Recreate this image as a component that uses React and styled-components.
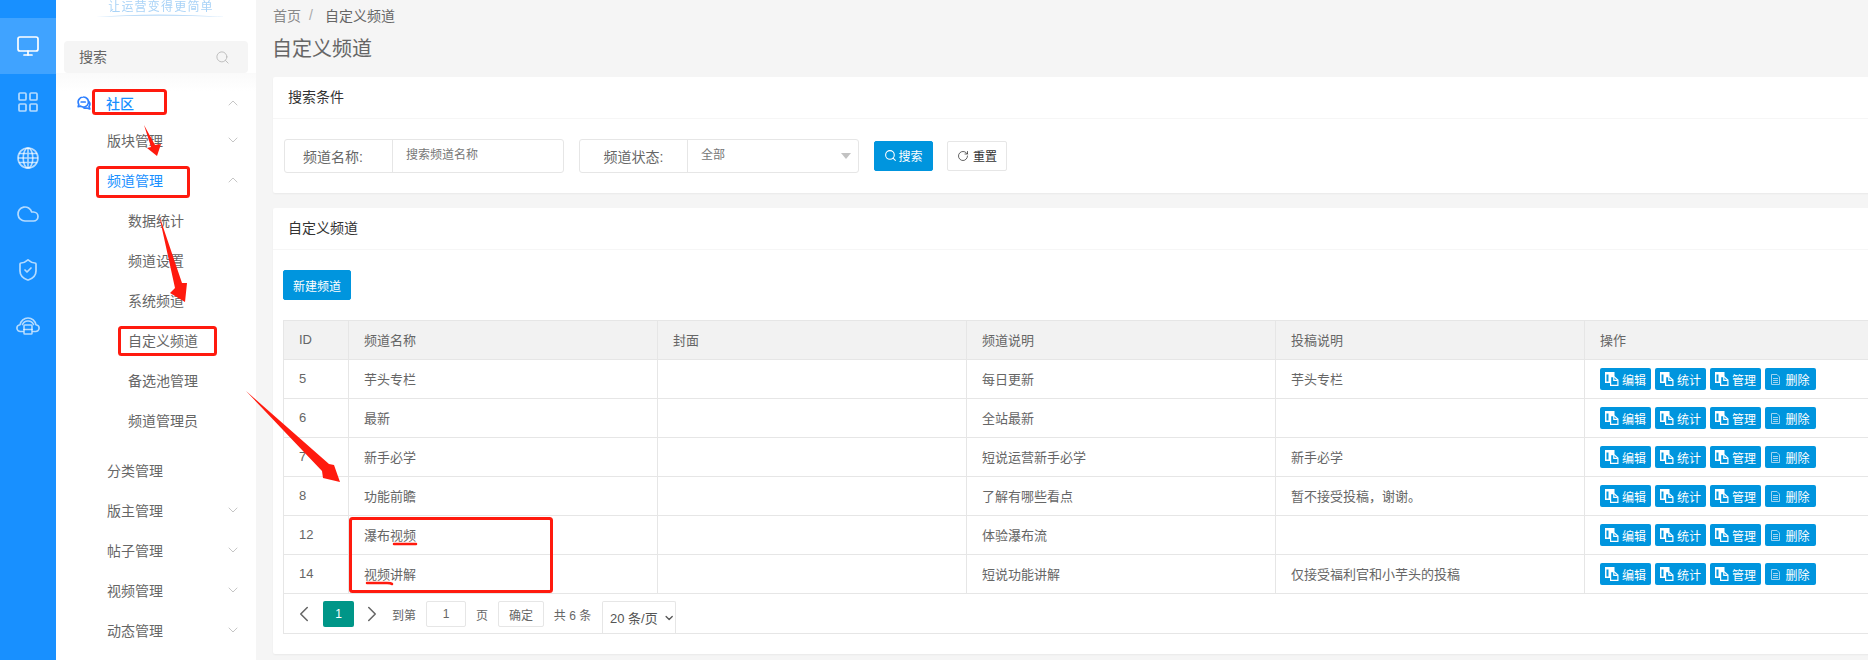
import React from 'react'
import styled, { createGlobalStyle } from 'styled-components'
import { Monitor, LayoutGrid, Cloud, ShieldCheck, Search, ChevronUp, ChevronDown, ChevronLeft, ChevronRight, RotateCw } from 'lucide-react'

const GlobalStyle = createGlobalStyle`
  html, body {
    margin: 0;
    padding: 0;
    background: #f5f5f5;
    overflow: hidden;
  }
  * { box-sizing: border-box; }
  body {
    font-family: "Liberation Sans", "Noto Sans CJK SC", sans-serif;
    font-size: 14px;
    color: #666;
  }
`

const Page = styled.div`
  position: relative;
  display: flex;
  width: 1868px;
  height: 660px;
  overflow: hidden;
`

// left icon rail
const Rail = styled.nav`
  flex: 0 0 56px;
  padding-top: 18px;
  background: #1890ff;
`
const RailItem = styled.div`
  display: flex;
  align-items: center;
  justify-content: center;
  height: 56px;
  color: ${p => (p.$active ? '#fff' : 'rgba(255,255,255,.68)')};
  background: ${p => (p.$active ? '#40a3ff' : 'transparent')};
`

// second column
const Side = styled.aside`
  flex: 0 0 200px;
  background: #fff;
  overflow: hidden;
`
const Logo = styled.div`
  display: flex;
  flex-direction: column;
  align-items: center;
  height: 41px;
  padding-top: 1px;
  padding-left: 10px;
  color: #a9d3f7;
  font-size: 12px;
  line-height: 13px;
  letter-spacing: 1.2px;
  white-space: nowrap;
  filter: blur(.4px);
  svg { display: block; margin-top: -1px; }
`
const SearchBox = styled.div`
  display: flex;
  align-items: center;
  justify-content: space-between;
  height: 32px;
  margin: 0 8px;
  padding: 0 18px 0 15px;
  background: #f5f5f5;
  border-radius: 4px;
  color: #bbb;
  span { color: #666; padding-bottom: 2px; }
`
const Menu = styled.div`
  padding-top: 13px;
  padding-bottom: 20px;
  background: linear-gradient(#fafafa, #fff 18px);
`
const MenuRow = styled.div`
  display: flex;
  align-items: center;
  justify-content: space-between;
  height: ${p => (p.$top ? 34 : 40)}px;
  margin-top: ${p => (p.$gap ? 10 : 0)}px;
  padding: 0 15px 0 ${p => (p.$top ? 21 : p.$sub ? 72 : 51)}px;
  color: ${p => (p.$on ? '#1890ff' : '#666')};
  font-weight: ${p => (p.$top ? 500 : 400)};
  svg.chev { color: #c6c6c6; }
`
const MenuLabel = styled.span`
  display: flex;
  align-items: center;
  gap: 15px;
`

// main column
const Main = styled.main`
  flex: 1;
  min-width: 0;
  padding-left: 17px;
  overflow: hidden;
`
const Crumbs = styled.div`
  display: flex;
  align-items: center;
  height: 30px;
  color: #666;
  i { font-style: normal; color: #aaa; margin: 0 12px 0 8px; }
  span:first-child { color: #888; }
`
const Title = styled.h1`
  margin: 0 0 11px -1px;
  height: 36px;
  font-size: 20px;
  font-weight: 400;
  line-height: 38px;
  color: #666;
`
const Card = styled.section`
  width: 1640px;
  margin-bottom: 15px;
  background: #fff;
  border-radius: 2px;
  box-shadow: 0 1px 2px rgba(0,0,0,.05);
`
const CardHead = styled.div`
  height: 42px;
  padding-left: 15px;
  line-height: 41px;
  color: #333;
  border-bottom: 1px solid #f6f6f6;
`
const FilterBody = styled.div`
  display: flex;
  align-items: center;
  height: 74px;
  padding: 0 0 1px 11px;
`
const Field = styled.div`
  display: flex;
  width: 280px;
  height: 34px;
  margin-right: 15px;
  border: 1px solid #e6e6e6;
  border-radius: 3px;
`
const FieldLabel = styled.label`
  flex: 0 0 108px;
  padding-right: ${p => p.$pr || 0}px;
  text-align: center;
  line-height: 34px;
  border-right: 1px solid #e6e6e6;
`
const FieldValue = styled.div`
  position: relative;
  flex: 1;
  padding-left: 13px;
  font-size: 12px;
  line-height: 30px;
  color: #777;
`
const Caret = styled.b`
  position: absolute;
  right: 7px;
  top: 13px;
  border-top: 6px solid #c2c2c2;
  border-left: 5.5px solid transparent;
  border-right: 5.5px solid transparent;
`
const Btn = styled.button`
  display: inline-flex;
  align-items: center;
  justify-content: center;
  gap: ${p => (p.$ghost ? 4 : 1)}px;
  width: ${p => p.$w}px;
  height: 30px;
  margin-right: ${p => p.$mr || 0}px;
  padding: 0;
  font: inherit;
  font-size: 12px;
  color: ${p => (p.$ghost ? '#333' : '#fff')};
  background: ${p => (p.$ghost ? '#fff' : '#0095de')};
  border: 1px solid ${p => (p.$ghost ? '#e6e6e6' : '#0095de')};
  border-radius: 2px;
`
const ListBody = styled.div`
  padding: 20px 0 20px 10px;
`
const Table = styled.table`
  width: 1606px;
  margin-top: 20px;
  table-layout: fixed;
  border-collapse: collapse;
  font-size: 13px;
  th, td {
    height: 39px;
    padding: 0 15px 2px;
    font-weight: 400;
    text-align: left;
    color: #666;
    border: 1px solid #e6e6e6;
  }
  th { background: #f2f2f2; }
`
const Ops = styled.div`
  display: flex;
  gap: 4px;
  margin-top: 2px;
`
const OpBtn = styled.span`
  display: flex;
  align-items: center;
  justify-content: center;
  gap: ${p => (p.$del ? 5 : 3)}px;
  width: 51px;
  height: 22px;
  font-size: 12px;
  color: #fff;
  background: #0095de;
  border-radius: 2px;
`
const Pager = styled.div`
  display: flex;
  align-items: flex-end;
  width: 1606px;
  height: 40px;
  font-size: 12px;
  white-space: nowrap;
  color: #666;
  border: 1px solid #e6e6e6;
  border-top: 0;
`
const PagerCell = styled.span`
  display: flex;
  align-items: center;
  justify-content: center;
  flex: none;
  width: ${p => p.$w}px;
  height: 26px;
  margin: 0 ${p => p.$mr || 0}px 6px ${p => p.$ml || 0}px;
  color: ${p => (p.$on ? '#fff' : '#666')};
  background: ${p => (p.$on ? '#009688' : 'transparent')};
  border: ${p => (p.$box ? '1px solid #e6e6e6' : '0')};
  border-radius: 2px;
  svg { flex: none; }
`
const PageSize = styled.div`
  display: flex;
  align-items: center;
  flex: none;
  gap: 5px;
  width: 74px;
  height: 32px;
  margin-left: 11px;
  padding-left: 7px;
  font-size: 13px;
  color: #555;
  border: 1px solid #e6e6e6;
  border-bottom: 0;
  border-radius: 2px 2px 0 0;
`

// red marks someone drew over the screenshot
const Marks = styled.svg`
  position: absolute;
  left: 0;
  top: 0;
  pointer-events: none;
`

const GridGlobe = () => (
  <svg width="24" height="24" viewBox="0 0 24 24" fill="none" stroke="currentColor" strokeWidth="1.6">
    <circle cx="12" cy="12" r="10" />
    <ellipse cx="12" cy="12" rx="4.800" ry="10" />
    <path d="M12 2v20M3 7.500h18M2 12h20M3 16.500h18" />
  </svg>
)

const ServerCloud = () => (
  <svg width="24" height="24" viewBox="0 0 24 24" fill="none" stroke="currentColor" strokeWidth="1.6" strokeLinecap="round" strokeLinejoin="round">
    <path d="M7 17.500H4.500a3.400 3.400 0 0 1-.4-6.800A8 8 0 0 1 12 4a8 8 0 0 1 7.900 6.700 3.400 3.400 0 0 1-.4 6.800H17" />
    <path d="M6.500 10.500A5.800 5.800 0 0 1 12 7a5.800 5.800 0 0 1 5.500 3.500" />
    <rect x="8" y="11" width="8" height="9" rx=".8" />
    <path d="M8 15.500h8" />
  </svg>
)

const ChatIcon = () => (
  <svg width="14" height="14" viewBox="0 0 14 14" fill="none" stroke="#2f80ff" strokeWidth="1.7" strokeLinecap="round" strokeLinejoin="round">
    <path d="M6.200 1a5 5 0 0 0-4.400 7.400L1.200 10.600l2.400-.5A5 5 0 1 0 6.200 1z" />
    <path d="M4.200 6h4" />
    <path d="M11.800 5.500a4 4 0 0 1 .2 5l.8 2.500-3-1a4 4 0 0 1-3-.2" />
  </svg>
)

const FilesIcon = () => (
  <svg width="14" height="14" viewBox="0 0 14 14">
    <path d="M0 0h9.500v4H5v7H0zM1.500 2.500V9.500h2V2.500z" fill="#fff" fillRule="evenodd" />
    <path d="M5.600 4.600h3.400l3.900 3.500v5.300H5.600z" fill="none" stroke="#fff" strokeWidth="1.200" />
    <path d="M8.800 4.600v3.700h4" fill="none" stroke="#fff" strokeWidth="1.200" />
  </svg>
)

const PageIcon = () => (
  <svg width="9" height="11" viewBox="0 0 9 11" fill="none" stroke="#9fd4f2" strokeWidth="1">
    <path d="M.5.500h5.500l2.500 2.500v7.500h-8z" />
    <path d="M2 4.500h5M2 6.500h5M2 8.500h5" />
  </svg>
)

const RAIL = [Monitor, LayoutGrid, GridGlobe, Cloud, ShieldCheck, ServerCloud]

const MENU = [
  { label: '版块管理', chev: 'down' },
  { label: '频道管理', chev: 'up', on: true },
  { label: '数据统计', sub: true },
  { label: '频道设置', sub: true },
  { label: '系统频道', sub: true },
  { label: '自定义频道', sub: true },
  { label: '备选池管理', sub: true },
  { label: '频道管理员', sub: true },
  { label: '分类管理', gap: true },
  { label: '版主管理', chev: 'down' },
  { label: '帖子管理', chev: 'down' },
  { label: '视频管理', chev: 'down' },
  { label: '动态管理', chev: 'down' },
]

const ROWS = [
  [5, '芋头专栏', '每日更新', '芋头专栏'],
  [6, '最新', '全站最新', ''],
  [7, '新手必学', '短说运营新手必学', '新手必学'],
  [8, '功能前瞻', '了解有哪些看点', '暂不接受投稿，谢谢。'],
  [12, '瀑布视频', '体验瀑布流', ''],
  [14, '视频讲解', '短说功能讲解', '仅接受福利官和小芋头的投稿'],
]

const Chev = ({ dir }) => {
  const Icon = dir === 'up' ? ChevronUp : ChevronDown
  return <Icon className="chev" size={16} strokeWidth={1.5} />
}

export default function App() {
  return (
    <Page>
      <GlobalStyle />
      <Rail>
        {RAIL.map((Icon, i) => (
          <RailItem key={i} $active={i === 0}>
            <Icon size={24} strokeWidth={1.7} />
          </RailItem>
        ))}
      </Rail>

      <Side>
        <Logo>
          让运营变得更简单
          <svg width="130" height="6" viewBox="0 0 130 6">
            <path d="M0 4Q60-1 130 4Q60 1.500 0 4z" fill="#bcdcf8" />
          </svg>
        </Logo>
        <SearchBox>
          <span>搜索</span>
          <Search size={15} strokeWidth={1.5} />
        </SearchBox>
        <Menu>
          <MenuRow $top $on>
            <MenuLabel><ChatIcon />社区</MenuLabel>
            <Chev dir="up" />
          </MenuRow>
          {MENU.map(m => (
            <MenuRow key={m.label} $sub={m.sub} $on={m.on} $gap={m.gap}>
              <span>{m.label}</span>
              {m.chev && <Chev dir={m.chev} />}
            </MenuRow>
          ))}
        </Menu>
      </Side>

      <Main>
        <Crumbs><span>首页</span><i>/</i><span>自定义频道</span></Crumbs>
        <Title>自定义频道</Title>

        <Card>
          <CardHead>搜索条件</CardHead>
          <FilterBody>
            <Field>
              <FieldLabel $pr={11}>频道名称:</FieldLabel>
              <FieldValue>搜索频道名称</FieldValue>
            </Field>
            <Field>
              <FieldLabel>频道状态:</FieldLabel>
              <FieldValue>全部<Caret /></FieldValue>
            </Field>
            <Btn $w={59} $mr={14}><Search size={13} strokeWidth={2} />搜索</Btn>
            <Btn $w={60} $ghost><RotateCw size={12} strokeWidth={1.5} />重置</Btn>
          </FilterBody>
        </Card>

        <Card>
          <CardHead>自定义频道</CardHead>
          <ListBody>
            <Btn $w={68}>新建频道</Btn>
            <Table>
              <colgroup>
                <col width="65" />
                <col width="309" />
                <col width="309" />
                <col width="309" />
                <col width="309" />
                <col width="305" />
              </colgroup>
              <thead>
                <tr>
                  {['ID', '频道名称', '封面', '频道说明', '投稿说明', '操作'].map(h => <th key={h}>{h}</th>)}
                </tr>
              </thead>
              <tbody>
                {ROWS.map(([id, name, desc, note]) => (
                  <tr key={id}>
                    <td>{id}</td>
                    <td>{name}</td>
                    <td />
                    <td>{desc}</td>
                    <td>{note}</td>
                    <td>
                      <Ops>
                        {['编辑', '统计', '管理'].map(t => (
                          <OpBtn key={t}><FilesIcon />{t}</OpBtn>
                        ))}
                        <OpBtn $del><PageIcon />删除</OpBtn>
                      </Ops>
                    </td>
                  </tr>
                ))}
              </tbody>
            </Table>
            <Pager>
              <PagerCell $w={16} $ml={12} $mr={11}><ChevronLeft size={26} strokeWidth={1.4} /></PagerCell>
              <PagerCell $w={31} $on>1</PagerCell>
              <PagerCell $w={16} $ml={10} $mr={12}><ChevronRight size={26} strokeWidth={1.4} /></PagerCell>
              <PagerCell $w={24} $mr={10}>到第</PagerCell>
              <PagerCell $w={40} $box $mr={10}>1</PagerCell>
              <PagerCell $w={12} $mr={10}>页</PagerCell>
              <PagerCell $w={46} $box $mr={10}>确定</PagerCell>
              <PagerCell $w={37}>共 6 条</PagerCell>
              <PageSize>20 条/页<ChevronDown size={14} strokeWidth={2.5} /></PageSize>
            </Pager>
          </ListBody>
        </Card>
      </Main>

      <Marks width="1868" height="660" viewBox="0 0 1868 660">
        <g fill="none" stroke="#ff1a0e" strokeWidth="3" strokeLinejoin="round">
          <rect x="93.500" y="90.500" width="72" height="23" rx="2" />
          <rect x="97.500" y="167.500" width="91" height="29" rx="2" />
          <rect x="119.500" y="327.500" width="96" height="27" rx="2" />
          <rect x="350.500" y="518.500" width="201" height="73" rx="2" />
        </g>
        <g fill="none" stroke="#ff1a0e" strokeWidth="2.500" strokeLinecap="round">
          <path d="M394 544h22" />
          <path d="M367 583h20q4 0 5 1" />
        </g>
        <g fill="#ff1a0e">
          <path d="M144 125L155 145L161 144L157 156L147 148L151 147z" />
          <path d="M159 215L182 283L187 283L185 302L170 293L175 288z" />
          <path d="M246 391L329 464L334 465L340 482L323 478L322 471z" />
        </g>
      </Marks>
    </Page>
  )
}
